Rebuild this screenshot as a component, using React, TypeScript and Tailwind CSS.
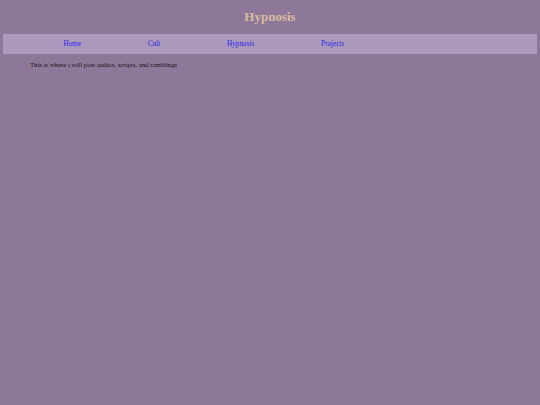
export default function App() {
  const links = ["Home", "Cult", "Hypnosis", "Projects"];
  return (
    <div className="min-h-[405px] w-full bg-[#8e7899] pt-[9px] font-['Liberation_Serif',serif]">
      <h1 className="text-center text-[13px] font-bold leading-[15px] text-[#d8bca0]">Hypnosis</h1>
      <nav className="mx-[3px] mt-[10px] flex h-[20px] items-center bg-[#ab99bd] pl-[60.5px]">
        <ul className="flex items-center gap-[66.8px] text-[7.2px] leading-[9px]">
          {links.map((l) => (
            <li key={l} className="leading-[9px]">
              <a href="#" className="text-[#2a1ee6]">
                {l}
              </a>
            </li>
          ))}
        </ul>
      </nav>
      <p className="mt-[6px] pl-[30px] text-[6.75px] leading-[9px] text-[#1a1020]">
        This is where i will post audios, scripts, and ramblings
      </p>
    </div>
  );
}
